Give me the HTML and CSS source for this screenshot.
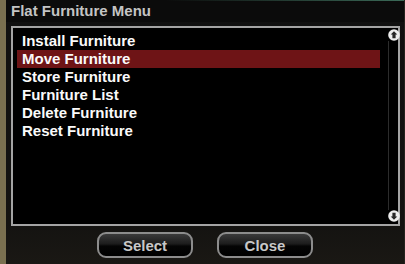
FILE: index.html
```html
<!DOCTYPE html>
<html lang="en">
<head>
    <meta charset="UTF-8">
    <title>Flat Furniture Menu</title>
    <link rel="stylesheet" href="styles.css">
</head>
<body>
    <div class="window">
        <!-- Title -->
        <div class="titlebar">Flat Furniture Menu</div>

        <!-- List -->
        <div class="listbox">
            <ul class="items">
                <li>Install Furniture</li>
                <li class="selected">Move Furniture</li>
                <li>Store Furniture</li>
                <li>Furniture List</li>
                <li>Delete Furniture</li>
                <li>Reset Furniture</li>
            </ul>
            <div class="scrollbar">
                <svg class="scroll-btn" width="12" height="12" viewBox="0 0 12 12">
                    <circle cx="6" cy="6" r="5.8" fill="#ededed"/>
                    <polygon points="6,2.3 9.3,5.6 7.6,5.6 7.6,9.3 4.4,9.3 4.4,5.6 2.7,5.6" fill="#262626"/>
                </svg>
                <div class="track"></div>
                <svg class="scroll-btn" width="12" height="12" viewBox="0 0 12 12">
                    <circle cx="6" cy="6" r="5.8" fill="#ededed"/>
                    <polygon points="6,9.7 9.3,6.4 7.6,6.4 7.6,2.7 4.4,2.7 4.4,6.4 2.7,6.4" fill="#262626"/>
                </svg>
            </div>
        </div>

        <!-- Buttons -->
        <div class="actions">
            <button class="btn">Select</button>
            <button class="btn">Close</button>
        </div>
    </div>
</body>
</html>
```

FILE: styles.css
```css
* {
    margin: 0;
    padding: 0;
    box-sizing: border-box;
}

body {
    background-color: #7a7050;
    font-family: "Liberation Sans", Arial, sans-serif;
    font-weight: bold;
    font-size: 15px;
    height: 264px;
    overflow: hidden;
}

.window {
    margin-left: 6px;
    width: 399px;
    height: 264px;
    background: linear-gradient(to bottom, #101010 0%, #141311 85%, #1a1814 100%);
    border-right: 1px solid #25231e;
}

/* Title */
.titlebar {
    height: 22px;
    padding: 1px 0 0 5px;
    line-height: 18px;
    color: #c4c4c4;
    background-color: #0b0b0b;
    border-top: 1px solid #0b0b0b;
    border-image: linear-gradient(to right, #0b0b0b 40%, #3b6a58 100%) 1 0 0 0;
}

/* List */
.listbox {
    display: flex;
    margin: 4px 0 0 5px;
    width: 389px;
    height: 200px;
    border: 2px solid #a4a4a4;
    background-color: #000;
}

.items {
    flex: 1;
    list-style: none;
    padding: 4px 8px 0 4px;
}

.items li {
    height: 18px;
    line-height: 18px;
    padding-left: 5px;
    color: #fafafa;
}

.items li.selected {
    background-color: #6e1416;
}

.scrollbar {
    width: 11px;
    margin-right: -1px;
    display: flex;
    flex-direction: column;
    align-items: center;
    padding: 1px 0 2px;
}

.scroll-btn {
    display: block;
    flex-shrink: 0;
}

.track {
    flex: 1;
    width: 11px;
    border-left: 1px solid #2c2c2c;
}

/* Buttons */
.actions {
    display: flex;
    justify-content: center;
    gap: 24px;
    margin-top: 6px;
}

.btn {
    width: 96px;
    height: 26px;
    border: 2px solid #8c8c8c;
    border-radius: 9px;
    background: linear-gradient(to bottom, #3a3a3a 0%, #1c1c1c 45%, #050505 55%, #000 100%);
    color: #c8c8c8;
    font-family: "Liberation Sans", Arial, sans-serif;
    font-weight: bold;
    font-size: 15px;
    line-height: 21px;
}
```
